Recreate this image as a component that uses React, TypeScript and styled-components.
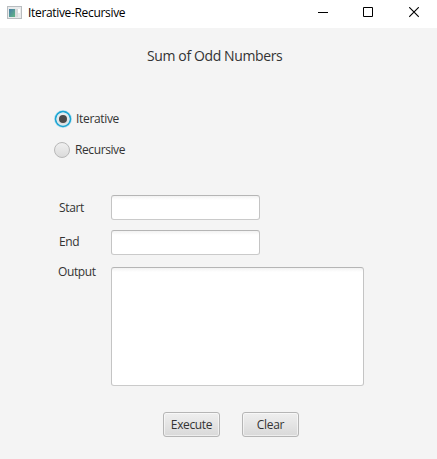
import React, { useState } from "react";
import styled, { createGlobalStyle } from "styled-components";

const GlobalStyle = createGlobalStyle`
  * { box-sizing: border-box; }
  body { margin: 0; overflow: hidden; }
`;

const Window = styled.div`
  width: 437px;
  height: 459px;
  display: flex;
  flex-direction: column;
  background: #f4f4f4;
  color: #333;
  font: 12px/16px "Open Sans", "Noto Sans", sans-serif;
`;

const TitleBar = styled.header`
  height: 28px;
  flex: none;
  display: flex;
  align-items: center;
  padding: 0 0 3px 7px;
  background: #fff;
  color: #000;
`;

const Text = styled.span<{ $spacing?: number }>`
  white-space: nowrap;
  letter-spacing: ${(p) => p.$spacing ?? 0}px;
`;

const WindowTitle = styled(Text)`
  flex: 1;
  margin-left: 6px;
  padding-top: 1px;
`;

const WindowButton = styled.button<{ $width: number }>`
  width: ${(p) => p.$width}px;
  height: 25px;
  padding: 0;
  border: 0;
  background: none;
  display: flex;
  align-items: center;
  justify-content: flex-start;
`;

const Content = styled.main`
  flex: 1;
  display: flex;
  flex-direction: column;
`;

const Heading = styled.h1`
  margin: 18px 0 0 147px;
  font-size: 14px;
  line-height: 20px;
  font-weight: 400;
`;

const Options = styled.div`
  display: flex;
  flex-direction: column;
  gap: 13px;
  margin: 44px 0 0 54px;
`;

const Option = styled.button`
  display: flex;
  align-items: center;
  height: 18px;
  padding: 0;
  border: 0;
  background: none;
  color: inherit;
  font: inherit;
`;

const OptionLabel = styled(Text)`
  margin-left: 4px;
`;

const Form = styled.div`
  display: grid;
  grid-template-columns: 53px 253px;
  grid-template-rows: 25px 25px 119px;
  row-gap: 10px;
  margin: 36px 0 0 58px;
`;

const Label = styled.label<{ $indent?: number; $top?: number }>`
  padding: ${(p) => p.$top ?? 5}px 0 0 ${(p) => p.$indent ?? 0}px;
`;

const Input = styled.input`
  width: 149px;
  height: 25px;
  padding: 4px 7px;
  border: 1px solid #c8c8c8;
  border-color: #b5b5b5 #c4c4c4 #cacaca;
  border-radius: 3px;
  outline: 0;
  background: linear-gradient(#f2f2f2, #fff 4px);
  font: inherit;
`;

const Output = styled.textarea`
  display: block;
  width: 253px;
  height: 119px;
  margin-top: 2px;
  padding: 4px 7px;
  border: 1px solid #c8c8c8;
  border-color: #b5b5b5 #c4c4c4 #cacaca;
  border-radius: 3px;
  outline: 0;
  resize: none;
  background: linear-gradient(#f2f2f2, #fff 4px);
  font: inherit;
`;

const OutputLabel = styled(Label)`
  margin-top: -1px;
`;

const Actions = styled.div`
  display: flex;
  gap: 22px;
  margin: 28px 0 0 163px;
`;

const Button = styled.button`
  width: 57px;
  height: 25px;
  padding: 0;
  border: 1px solid #b5b5b5;
  border-radius: 3px;
  background: linear-gradient(#efefef, #d9d9d9);
  box-shadow: inset 0 0 0 1px rgba(255, 255, 255, 0.55);
  color: #333;
  font: inherit;
`;

const AppIcon = () => (
  <svg width="15" height="13" viewBox="0 0 15 13">
    <defs>
      <linearGradient id="pane" x1="0" y1="0" x2="1" y2="1">
        <stop offset="0" stopColor="#477ca9" />
        <stop offset="1" stopColor="#62b783" />
      </linearGradient>
    </defs>
    <rect x="0.5" y="0.5" width="14" height="12" fill="#e9ebec" stroke="#b9bdc0" />
    <rect x="2" y="3" width="6" height="8" fill="url(#pane)" />
    <rect x="8" y="3" width="3" height="8" fill="#d8dadb" />
    <rect x="11" y="3" width="2" height="4" fill="#fff" />
  </svg>
);

const RadioMark = ({ selected }: { selected: boolean }) => (
  <svg width={selected ? 18 : 17} height="18" viewBox={selected ? "0 0 18 18" : "0 0 17 18"}>
    <defs>
      <linearGradient id="knob" x1="0" y1="0" x2="0" y2="1">
        <stop offset="0" stopColor="#f0f0f0" />
        <stop offset="1" stopColor="#dadada" />
      </linearGradient>
    </defs>
    {selected ? (
      <>
        <circle cx="9" cy="9" r="9" fill="#b9e2f0" />
        <circle cx="9" cy="9" r="7.4" fill="url(#knob)" stroke="#1ba5d3" strokeWidth="1.7" />
        <circle cx="9" cy="9" r="6" fill="none" stroke="#d5edf5" />
        <circle cx="9" cy="9" r="4" fill="#4a4a4a" />
      </>
    ) : (
      <circle cx="8" cy="9" r="7.5" fill="url(#knob)" stroke="#b8b8b8" />
    )}
  </svg>
);

export default function App() {
  const [mode, setMode] = useState("iterative");
  return (
    <>
      <GlobalStyle />
      <Window>
        <TitleBar>
          <AppIcon />
          <WindowTitle $spacing={-0.33}>Iterative-Recursive</WindowTitle>
          <WindowButton $width={45} aria-label="Minimize">
            <svg width="10" height="11"><path d="M0 5.5H10" stroke="#000" /></svg>
          </WindowButton>
          <WindowButton $width={46} aria-label="Maximize">
            <svg width="10" height="11"><path d="M.5 .5H9.5V9.5H.5Z" fill="none" stroke="#000" /></svg>
          </WindowButton>
          <WindowButton $width={28} aria-label="Close">
            <svg width="10" height="11"><path d="M.2 .2L9.8 9.8M9.8 .2L.2 9.8" stroke="#000" strokeWidth="1.1" /></svg>
          </WindowButton>
        </TitleBar>
        <Content>
          <Heading><Text $spacing={-0.38}>Sum of Odd Numbers</Text></Heading>
          <Options role="radiogroup">
            <Option role="radio" aria-checked={mode === "iterative"} onClick={() => setMode("iterative")}>
              <RadioMark selected={mode === "iterative"} />
              <OptionLabel $spacing={-0.33}>Iterative</OptionLabel>
            </Option>
            <Option role="radio" aria-checked={mode === "recursive"} onClick={() => setMode("recursive")}>
              <RadioMark selected={mode === "recursive"} />
              <OptionLabel $spacing={-0.4}>Recursive</OptionLabel>
            </Option>
          </Options>
          <Form>
            <Label $indent={1} htmlFor="start"><Text $spacing={-0.35}>Start</Text></Label>
            <Input id="start" />
            <Label $indent={1} $top={4} htmlFor="end"><Text $spacing={-0.4}>End</Text></Label>
            <Input id="end" />
            <OutputLabel $top={0} htmlFor="output"><Text $spacing={-0.4}>Output</Text></OutputLabel>
            <Output id="output" readOnly />
          </Form>
          <Actions>
            <Button><Text $spacing={-0.35}>Execute</Text></Button>
            <Button><Text $spacing={-0.3}>Clear</Text></Button>
          </Actions>
        </Content>
      </Window>
    </>
  );
}
